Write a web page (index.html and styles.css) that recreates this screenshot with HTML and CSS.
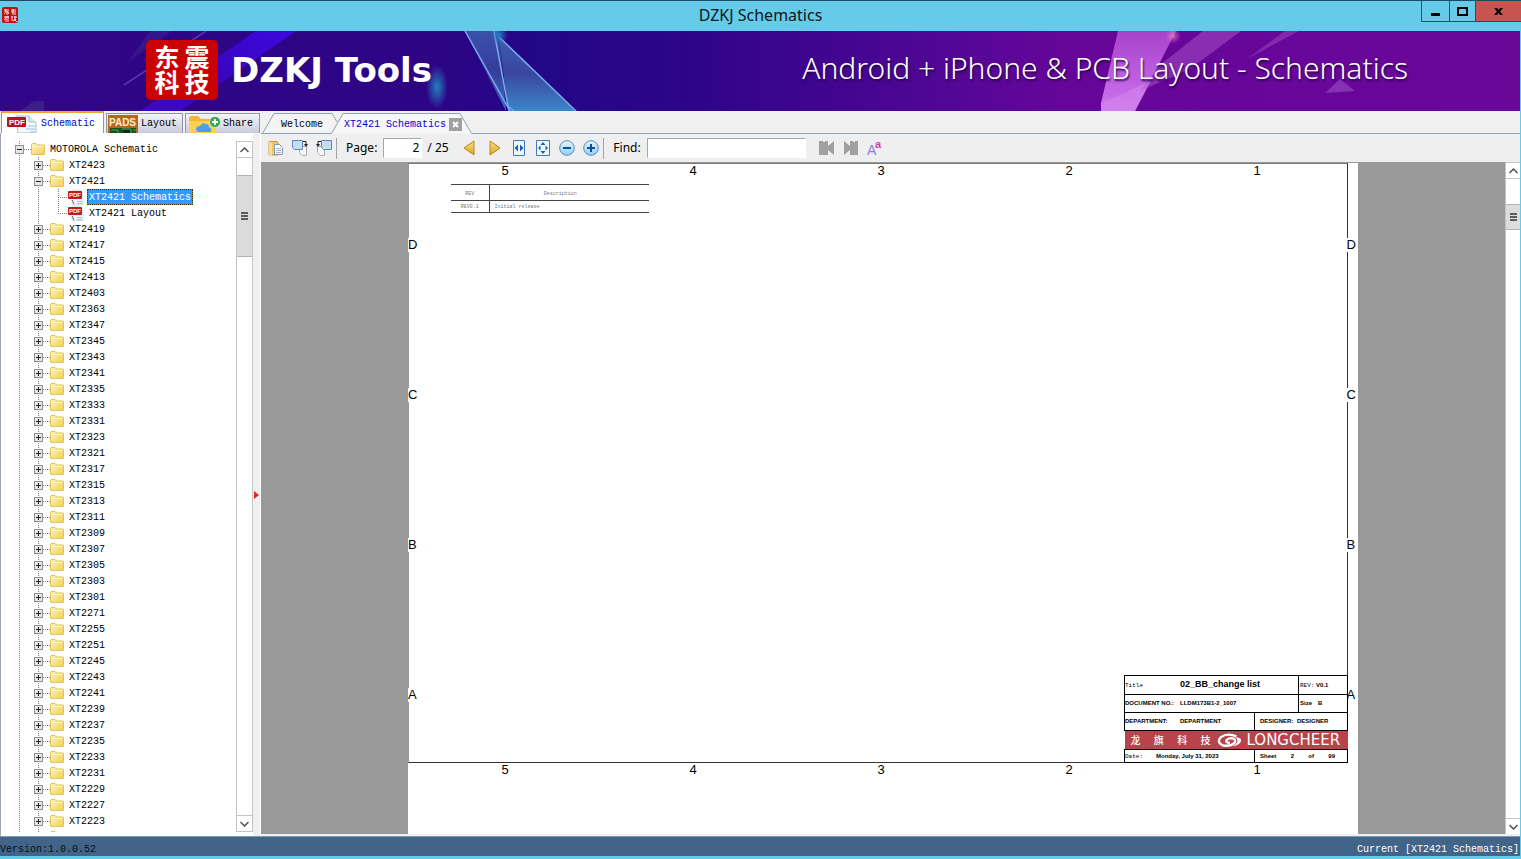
FILE: index.html
```html
<!DOCTYPE html>
<html lang="en">
<head>
<meta charset="utf-8">
<title>DZKJ Schematics</title>
<link rel="stylesheet" href="styles.css">
</head>
<body>
<svg class="defs" width="0" height="0" aria-hidden="true">
  <defs>
    <linearGradient id="gFold" x1="0" y1="0" x2="1" y2="1"><stop offset="0" stop-color="#fff6b4"/><stop offset="1" stop-color="#f3ce59"/></linearGradient>
    <linearGradient id="gGold" x1="0" y1="0" x2="0" y2="1"><stop offset="0" stop-color="#f9e08a"/><stop offset="1" stop-color="#dba520"/></linearGradient>
    <linearGradient id="gBlue" x1="0" y1="0" x2="0" y2="1"><stop offset="0" stop-color="#e9f5ff"/><stop offset="1" stop-color="#93cdf5"/></linearGradient>
  </defs>
  <symbol id="folder" viewBox="0 0 14 14"><path d="M.5 2.500q0-1 1-1h3.500l1.500 1.500h6.500q.5 0 .5.5v8.500q0 .5-.5.5h-12q-.5 0-.5-.5z" fill="url(#gFold)" stroke="#e2c05c"/><path d="M1.500 4.500h11" stroke="#fffbd8"/></symbol>
</svg>

<header class="titlebar">
  <svg class="app-icon" viewBox="0 0 16 16"><rect width="16" height="16" rx="2" fill="#c40d0d"/><path d="M2 3h5M4 2l-1 3h4M5 4v4M2 7l1-1M6 6l1 1M9 3h5M9 5h5M11 2v4M10 7h4M2 10h5M4 9v6M2 13l2-2M6 9v6M9 10h2M10 9v5M12 10h3M13 9v3M11 14l3-2M12 12l3 3" stroke="#fff" stroke-width=".9" fill="none"/></svg>
  <h1>DZKJ Schematics</h1>
  <div class="win-buttons">
    <button class="wb wb-min" aria-label="Minimize"><svg viewBox="0 0 11 9"><path d="M1 6h9v3H1z"/></svg></button>
    <button class="wb wb-max" aria-label="Maximize"><svg viewBox="0 0 11 9"><path d="M1 1h9v7H1z" fill="none" stroke="#000" stroke-width="2"/></svg></button>
    <button class="wb wb-close" aria-label="Close"><svg viewBox="0 0 11 9"><path d="M1 1h3l1.500 2L7 1h3L7 4.500 10 8H7L5.500 6 4 8H1l3-3.500z"/></svg></button>
  </div>
</header>

<section class="banner">
  <svg class="banner-art" viewBox="0 0 1521 80" preserveAspectRatio="xMinYMin slice" aria-hidden="true">
    <defs>
      <linearGradient id="bg"><stop offset="0" stop-color="#310688"/><stop offset=".29" stop-color="#2c0484"/><stop offset=".36" stop-color="#220786"/><stop offset=".45" stop-color="#2d0488"/><stop offset=".58" stop-color="#480692"/><stop offset=".7" stop-color="#650699"/><stop offset="1" stop-color="#6a0799"/></linearGradient>
      <linearGradient id="ray" x1="1" y1="0" x2="0" y2="1"><stop offset="0" stop-color="#3c08e0"/><stop offset=".5" stop-color="#3d05cf" stop-opacity=".8"/><stop offset="1" stop-color="#4308e0" stop-opacity=".7"/></linearGradient>
      <linearGradient id="tri" x1="0" y1="0" x2="0" y2="1"><stop offset="0" stop-color="#3c5fb0"/><stop offset=".5" stop-color="#3a469f"/><stop offset="1" stop-color="#3a86c8"/></linearGradient>
      <linearGradient id="pk" x1="0" y1="0" x2="0" y2="1"><stop offset="0" stop-color="#a842cb"/><stop offset="1" stop-color="#cc75ee"/></linearGradient>
      <radialGradient id="glow"><stop offset="0" stop-color="#257fc0"/><stop offset="1" stop-color="#257fc0" stop-opacity="0"/></radialGradient>
      <radialGradient id="hot"><stop offset="0" stop-color="#f59bc8"/><stop offset="1" stop-color="#e060c0" stop-opacity="0"/></radialGradient>
    </defs>
    <rect width="1521" height="80" fill="url(#bg)"/>
    <path d="M256 0h40L180 80h-40z" fill="url(#ray)"/>
    <path d="M150 0h22L128 31z" fill="#3c2590" opacity=".5"/>
    <path d="M206 0L124 54" stroke="#6a5cc0" stroke-width="1.500" opacity=".6"/>
    <path d="M20 80l14-10h10v10z" fill="#46469c" opacity=".4"/>
    <ellipse cx="437" cy="56" rx="11" ry="22" fill="url(#glow)"/>
    <path d="M465 0h34l7 80z" fill="url(#tri)" opacity=".85"/>
    <path d="M499 5l77 75h-68z" fill="url(#tri)"/>
    <path d="M465 0l45 80M494 0l14 75 6 5M499 6l77 74" fill="none" stroke="#79a6ec" stroke-width="1.500"/>
    <circle cx="499" cy="4" r="9" fill="url(#glow)"/>
    <path d="M1118 0h58l-41 80h-34v-8z" fill="url(#pk)"/>
    <path d="M1203 0h38l-51 38-50 22 20-26z" fill="#963bb9" opacity=".75"/>
    <path d="M1285 0h14l-52 28z" fill="#9038b5" opacity=".7"/>
    <path d="M1340 48l15 12-30 2z" fill="#8631b4"/>
    <path d="M1101 72l50-22-16 30h-34z" fill="#d58af3" opacity=".5"/>
    <circle cx="1173" cy="5" r="8" fill="url(#hot)" opacity=".7"/>
  </svg>
  <div class="logo"><span>东</span><span>震</span><span>科</span><span>技</span></div>
  <p class="brand">DZKJ Tools</p>
  <p class="slogan">Android + iPhone &amp; PCB Layout - Schematics</p>
</section>

<main class="main">
  <aside class="side">
    <nav class="side-tabs">
      <button class="stab active"><svg width="32" height="18" viewBox="0 0 32 18"><path d="M9 1h13l7 7v10H11z" fill="#f2f8fc" stroke="#a9bccb"/><path d="M22 1v6h7" fill="#d7e6f0" stroke="#a9bccb"/><path d="M21 11h7M19 14h9M23 17h5" stroke="#9cc4e6"/><rect y="2" width="19" height="10" rx="1" fill="#b8141c"/><text x="2" y="10" class="pdf-lg">PDF</text></svg>Schematic</button>
      <button class="stab wide"><svg width="30" height="19" viewBox="0 0 30 19"><rect width="30" height="19" fill="#b8651e"/><text x="1" y="11" class="pads">PADS</text><path d="M2 13h26v6H2z" fill="#164f20"/><path d="M3 15h7v3M14 14h9v5M25 15h3" stroke="#4fa34c" fill="none"/><path d="M15 15h7v3h-7z" fill="#222"/></svg>Layout</button>
      <button class="stab share"><svg width="32" height="18" viewBox="0 0 32 18"><path d="M0 3q0-2 2-2h7l3 3h14v14H0z" fill="#f2b632"/><path d="M0 6h27v12H0z" fill="#ffd04f"/><path d="M10 17q-3 0-3-3t4-3q2-4 6-2 3 0 3 3 3 1 2 5z" fill="#4ba0e8"/><circle cx="26" cy="7" r="5.500" fill="#38a64a" stroke="#fff" stroke-width=".6"/><path d="M26 4v6M23 7h6" stroke="#fff" stroke-width="1.800"/></svg>Share</button>
    </nav>
    <div class="side-body">
      <div class="tree-wrap">
      <ul class="tree">
        <li class="root"><button class="box minus" aria-label="Collapse"></button><svg class="fold"><use href="#folder"/></svg><a href="#">MOTOROLA Schematic</a></li>
        <li><button class="box" aria-label="Expand"></button><svg class="fold"><use href="#folder"/></svg><a href="#">XT2423</a></li>
        <li><button class="box minus" aria-label="Collapse"></button><svg class="fold"><use href="#folder"/></svg><a href="#">XT2421</a></li>
        <li class="leaf"><svg class="pdf" viewBox="0 0 16 16"><path d="M4 1h8l3 4v10.500H4z" fill="#eef6fc" stroke="#c0d2e0" stroke-width=".6"/><path d="M9 12.500h5M9 14.500h5" stroke="#9cc4e6"/><path d="M4 11l2 4" stroke="#667"/><rect y="2" width="14" height="8" rx="1" fill="#c11920"/><text x="1" y="8" class="pdf-sm">PDF</text></svg><a href="#" class="selected">XT2421 Schematics</a></li>
        <li class="leaf last"><svg class="pdf" viewBox="0 0 16 16"><path d="M4 1h8l3 4v10.500H4z" fill="#eef6fc" stroke="#c0d2e0" stroke-width=".6"/><path d="M9 12.500h5M9 14.500h5" stroke="#9cc4e6"/><path d="M4 11l2 4" stroke="#667"/><rect y="2" width="14" height="8" rx="1" fill="#c11920"/><text x="1" y="8" class="pdf-sm">PDF</text></svg><a href="#">XT2421 Layout</a></li>
        <li><button class="box" aria-label="Expand"></button><svg class="fold"><use href="#folder"/></svg><a href="#">XT2419</a></li>
        <li><button class="box" aria-label="Expand"></button><svg class="fold"><use href="#folder"/></svg><a href="#">XT2417</a></li>
        <li><button class="box" aria-label="Expand"></button><svg class="fold"><use href="#folder"/></svg><a href="#">XT2415</a></li>
        <li><button class="box" aria-label="Expand"></button><svg class="fold"><use href="#folder"/></svg><a href="#">XT2413</a></li>
        <li><button class="box" aria-label="Expand"></button><svg class="fold"><use href="#folder"/></svg><a href="#">XT2403</a></li>
        <li><button class="box" aria-label="Expand"></button><svg class="fold"><use href="#folder"/></svg><a href="#">XT2363</a></li>
        <li><button class="box" aria-label="Expand"></button><svg class="fold"><use href="#folder"/></svg><a href="#">XT2347</a></li>
        <li><button class="box" aria-label="Expand"></button><svg class="fold"><use href="#folder"/></svg><a href="#">XT2345</a></li>
        <li><button class="box" aria-label="Expand"></button><svg class="fold"><use href="#folder"/></svg><a href="#">XT2343</a></li>
        <li><button class="box" aria-label="Expand"></button><svg class="fold"><use href="#folder"/></svg><a href="#">XT2341</a></li>
        <li><button class="box" aria-label="Expand"></button><svg class="fold"><use href="#folder"/></svg><a href="#">XT2335</a></li>
        <li><button class="box" aria-label="Expand"></button><svg class="fold"><use href="#folder"/></svg><a href="#">XT2333</a></li>
        <li><button class="box" aria-label="Expand"></button><svg class="fold"><use href="#folder"/></svg><a href="#">XT2331</a></li>
        <li><button class="box" aria-label="Expand"></button><svg class="fold"><use href="#folder"/></svg><a href="#">XT2323</a></li>
        <li><button class="box" aria-label="Expand"></button><svg class="fold"><use href="#folder"/></svg><a href="#">XT2321</a></li>
        <li><button class="box" aria-label="Expand"></button><svg class="fold"><use href="#folder"/></svg><a href="#">XT2317</a></li>
        <li><button class="box" aria-label="Expand"></button><svg class="fold"><use href="#folder"/></svg><a href="#">XT2315</a></li>
        <li><button class="box" aria-label="Expand"></button><svg class="fold"><use href="#folder"/></svg><a href="#">XT2313</a></li>
        <li><button class="box" aria-label="Expand"></button><svg class="fold"><use href="#folder"/></svg><a href="#">XT2311</a></li>
        <li><button class="box" aria-label="Expand"></button><svg class="fold"><use href="#folder"/></svg><a href="#">XT2309</a></li>
        <li><button class="box" aria-label="Expand"></button><svg class="fold"><use href="#folder"/></svg><a href="#">XT2307</a></li>
        <li><button class="box" aria-label="Expand"></button><svg class="fold"><use href="#folder"/></svg><a href="#">XT2305</a></li>
        <li><button class="box" aria-label="Expand"></button><svg class="fold"><use href="#folder"/></svg><a href="#">XT2303</a></li>
        <li><button class="box" aria-label="Expand"></button><svg class="fold"><use href="#folder"/></svg><a href="#">XT2301</a></li>
        <li><button class="box" aria-label="Expand"></button><svg class="fold"><use href="#folder"/></svg><a href="#">XT2271</a></li>
        <li><button class="box" aria-label="Expand"></button><svg class="fold"><use href="#folder"/></svg><a href="#">XT2255</a></li>
        <li><button class="box" aria-label="Expand"></button><svg class="fold"><use href="#folder"/></svg><a href="#">XT2251</a></li>
        <li><button class="box" aria-label="Expand"></button><svg class="fold"><use href="#folder"/></svg><a href="#">XT2245</a></li>
        <li><button class="box" aria-label="Expand"></button><svg class="fold"><use href="#folder"/></svg><a href="#">XT2243</a></li>
        <li><button class="box" aria-label="Expand"></button><svg class="fold"><use href="#folder"/></svg><a href="#">XT2241</a></li>
        <li><button class="box" aria-label="Expand"></button><svg class="fold"><use href="#folder"/></svg><a href="#">XT2239</a></li>
        <li><button class="box" aria-label="Expand"></button><svg class="fold"><use href="#folder"/></svg><a href="#">XT2237</a></li>
        <li><button class="box" aria-label="Expand"></button><svg class="fold"><use href="#folder"/></svg><a href="#">XT2235</a></li>
        <li><button class="box" aria-label="Expand"></button><svg class="fold"><use href="#folder"/></svg><a href="#">XT2233</a></li>
        <li><button class="box" aria-label="Expand"></button><svg class="fold"><use href="#folder"/></svg><a href="#">XT2231</a></li>
        <li><button class="box" aria-label="Expand"></button><svg class="fold"><use href="#folder"/></svg><a href="#">XT2229</a></li>
        <li><button class="box" aria-label="Expand"></button><svg class="fold"><use href="#folder"/></svg><a href="#">XT2227</a></li>
        <li><button class="box" aria-label="Expand"></button><svg class="fold"><use href="#folder"/></svg><a href="#">XT2223</a></li>
        <li><span class="blank"></span><svg class="fold"><use href="#folder"/></svg></li>
      </ul>
      <div class="scroll">
        <button class="arrow" aria-label="Scroll up"><svg viewBox="0 0 9 6"><path d="M.5 5l4-4 4 4"/></svg></button>
        <div class="track tree-track"><div class="thumb"><i></i><i></i><i></i></div></div>
        <button class="arrow" aria-label="Scroll down"><svg viewBox="0 0 9 6"><path d="M.5 1l4 4 4-4"/></svg></button>
      </div>
      </div>
      <div class="splitter"><svg width="5" height="8" viewBox="0 0 5 8"><path d="M0 0l5 4-5 4z" fill="#d8282c"/></svg></div>
    </div>
  </aside>

  <section class="work">
    <nav class="doc-tabs">
      <svg class="tab-lines" width="212" height="23" viewBox="0 0 212 23" aria-hidden="true"><path d="M1.500 22.500L13 2.500H71l4 7-6 13z" fill="#f3f3f3" stroke="none"/><path d="M70 23L82 2.500H199L211 23z" fill="#f7f7f7" stroke="none"/><path d="M0 22.500h1.500L13 2.500H71L76 11M1 22.500H70.500L82 2.500H199L210.500 22.500H212" fill="none" stroke="#8ea2b4"/><path d="M72 22.500H209" stroke="#f1f1f1"/></svg>
      <button class="dtab">Welcome</button>
      <button class="dtab current">XT2421 Schematics</button>
      <button class="tab-x" aria-label="Close tab"><svg viewBox="0 0 13 13"><path d="M4 4l5 5M9 4l-5 5" stroke="#fff" stroke-width="2"/></svg></button>
    </nav>
    <div class="toolbar">
      <button class="tb" aria-label="Copy"><svg viewBox="0 0 16 16"><path d="M1 1.500h8l1 1V15H1z" fill="#f2c766" stroke="#c9973a"/><path d="M1 1v14l3 1V3z" fill="#f9dc91"/><path d="M6.500 4.500h5l3 3v7h-8z" fill="#fff" stroke="#8296ab"/><path d="M8 8.500h5M8 10.500h5M8 12.500h5" stroke="#9fb3c6"/></svg></button>
      <button class="tb" aria-label="Rotate right"><svg viewBox="0 0 16 16"><path d="M7.500 6.500h7v9h-4l-3-3z" fill="#f6f8fa" stroke="#a5adb6"/><path d="M.5.5h10v9h-8l-2-2z" fill="#c5dcf5" stroke="#5d86b8"/><path d="M11 1.500h3v3" fill="none" stroke="#222"/><path d="M12 4h4l-2 3z" fill="#222"/></svg></button>
      <button class="tb" aria-label="Rotate left"><svg viewBox="0 0 16 16"><path d="M1.500 6.500h7v9h-4l-3-3z" fill="#f6f8fa" stroke="#a5adb6"/><path d="M5.500.5h10v9h-8l-2-2z" fill="#c5dcf5" stroke="#5d86b8"/><path d="M5 1.500H2v3" fill="none" stroke="#222"/><path d="M0 4h4L2 7z" fill="#222"/></svg></button>
      <span class="sep"></span>
      <label for="page">Page:</label>
      <input id="page" class="page-no" type="text" value="2">
      <span class="total">/ 25</span>
      <button class="tb" aria-label="Previous page"><svg viewBox="0 0 16 16"><path d="M13 1v14L3 8z" fill="url(#gGold)" stroke="#b8870f"/></svg></button>
      <button class="tb next" aria-label="Next page"><svg viewBox="0 0 16 16"><path d="M3 1v14l10-7z" fill="url(#gGold)" stroke="#b8870f"/></svg></button>
      <button class="tb" aria-label="Fit width"><svg viewBox="0 0 16 16"><path d="M2.500.5h11v15h-11z" fill="#edf5ff" stroke="#3f78bd"/><path d="M7 4.500v7L3.500 8zM9 4.500v7L12.500 8z" fill="#1d5fae"/></svg></button>
      <button class="tb" aria-label="Fit page"><svg viewBox="0 0 16 16"><path d="M1.500.5h13v15h-13z" fill="#edf5ff" stroke="#3f78bd"/><path d="M8 2l2.500 3h-5zM8 14l2.500-3h-5zM3 8l2.500-2.500v5zM13 8l-2.500-2.500v5z" fill="#1d5fae"/></svg></button>
      <button class="tb" aria-label="Zoom out"><svg viewBox="0 0 16 16"><circle cx="8" cy="8" r="7.300" fill="url(#gBlue)" stroke="#4f8fca"/><path d="M4 8h8" stroke="#0e4f9c" stroke-width="2"/></svg></button>
      <button class="tb" aria-label="Zoom in"><svg viewBox="0 0 16 16"><circle cx="8" cy="8" r="7.300" fill="url(#gBlue)" stroke="#4f8fca"/><path d="M4 8h8M8 4v8" stroke="#0e4f9c" stroke-width="2"/></svg></button>
      <span class="sep"></span>
      <label for="find">Find:</label>
      <input id="find" class="find" type="text">
      <button class="tb" aria-label="Find previous"><svg viewBox="0 0 16 16"><path d="M0 1h4v1h2V1h3v5l6-5v14l-6-5v5H0z" fill="#a0a0a0"/></svg></button>
      <button class="tb" aria-label="Find next"><svg viewBox="0 0 16 16"><path d="M1 1l6 5V1h3v1h2V1h3v14H7v-5l-6 5z" fill="#a0a0a0"/></svg></button>
      <button class="tb" aria-label="Match case"><svg viewBox="0 0 16 16"><text x="0" y="15" class="case-a">A</text><text x="8" y="8" class="case-b">a</text></svg></button>
    </div>
    <div class="viewer">
      <div class="canvas">
        <article class="page">
          <div class="frame"></div>
          <div class="cols top"><span>5</span><span>4</span><span>3</span><span>2</span><span>1</span></div>
          <div class="cols bottom"><span>5</span><span>4</span><span>3</span><span>2</span><span>1</span></div>
          <div class="rows left"><span>D</span><span>C</span><span>B</span><span>A</span></div>
          <div class="rows right"><span>D</span><span>C</span><span>B</span><span>A</span></div>
          <table class="rev">
            <tr class="rev-head"><th>REV</th><th>Description</th></tr>
            <tr><td>REV0.1</td><td>Initial release</td></tr>
          </table>
          <table class="block">
            <colgroup><col class="c1"><col class="c2"><col class="c3"></colgroup>
            <tr class="r1"><td colspan="2"><span class="k mono">Title</span><strong>02_BB_change list</strong></td><td class="pad-sm"><span class="mono">REV:</span> V0.1</td></tr>
            <tr class="r2"><td colspan="2"><span class="k">DOCUMENT NO.:</span>LLDM173B1-2_1007</td><td class="pad-sm"><span class="s">Size</span>B</td></tr>
            <tr class="r2"><td><span class="k">DEPARTMENT:</span>DEPARTMENT</td><td colspan="2" class="pad"><span class="d">DESIGNER:</span>DESIGNER</td></tr>
            <tr class="r2 red"><td colspan="3"><div class="maker"><div class="cn"><span>龙</span><span>旗</span><span>科</span><span>技</span></div><svg width="25" height="15" viewBox="0 0 27 15"><path d="M21 3Q11-1 4 4q-5 6 3 9 8 1 12-3 2-4-3-5-5 0-6 3 0 2 4 2" fill="none" stroke="#fff" stroke-width="2.500"/><path d="M19 4q8 0 7 4-1 4-9 6 6-4 5-7 0-2-3-3z" fill="#fff"/></svg><span class="en">LONGCHEER</span></div></td></tr>
            <tr class="r5"><td><span class="dt mono">Date:</span>Monday, July 31, 2023</td><td colspan="2" class="pad"><div class="sheet"><span>Sheet</span><span>2</span><span>of</span><span>99</span></div></td></tr>
          </table>
        </article>
      </div>
      <div class="scroll view-scroll">
        <button class="arrow" aria-label="Scroll up"><svg viewBox="0 0 9 6"><path d="M.5 5l4-4 4 4"/></svg></button>
        <div class="track view-track"><div class="thumb"><i></i><i></i><i></i></div></div>
        <button class="arrow" aria-label="Scroll down"><svg viewBox="0 0 9 6"><path d="M.5 1l4 4 4-4"/></svg></button>
      </div>
    </div>
  </section>
</main>

<footer class="status"><span class="ver">Version:1.0.0.52</span><span>Current [XT2421 Schematics]</span></footer>
</body>
</html>
```
FILE: styles.css
```css
* { box-sizing: border-box; }
html, body { height: 100%; }
body {
  margin: 0;
  display: flex;
  flex-direction: column;
  overflow: hidden;
  background: #66cae9;
  color: #000;
  font: 10px/16px "Liberation Mono", "Noto Sans CJK SC", monospace;
}
button { margin: 0; padding: 0; border: 0; background: none; font: inherit; color: inherit; }
a { color: inherit; text-decoration: none; }
p, h1, ul { margin: 0; padding: 0; }
.defs { position: absolute; }

/* Title bar */
.titlebar {
  flex: none;
  height: 31px;
  display: grid;
  grid-template-columns: 1fr auto 1fr;
  border-top: 1px solid #1b4a66;
  background: #66cae9;
}
.app-icon { width: 16px; height: 16px; margin: 6px 2px; }
.titlebar h1 { font: 400 16px/28px "Noto Sans", sans-serif; color: #101820; }
.win-buttons { display: flex; justify-content: flex-end; }
.wb { height: 21px; display: flex; align-items: center; justify-content: center; border: 1px solid #24505f; border-top: 0; border-right: 0; }
.wb svg { width: 11px; height: 9px; }
.wb-min { width: 28px; }
.wb-max { width: 26px; }
.wb-close { width: 46px; background: #c75450; }

/* Banner */
.banner {
  flex: none;
  position: relative;
  height: 80px;
  display: flex;
  align-items: center;
  padding: 0 112px 2px 146px;
  margin-right: 1px;
  background: #6a0799;
  color: #fff;
  overflow: hidden;
}
.banner-art { position: absolute; inset: 0; width: 100%; height: 100%; }
.logo {
  position: relative;
  flex: none;
  width: 72px;
  height: 60px;
  display: grid;
  grid-template-columns: 30px 30px;
  grid-auto-rows: 25px;
  place-content: center;
  text-align: center;
  border-radius: 5px;
  background: #cb0203;
  font: 700 25px/23px "Noto Sans CJK SC", sans-serif;
}
.brand { position: relative; margin-left: 13px; font: 700 34px/38px "DejaVu Sans", sans-serif; white-space: nowrap; }
.slogan { position: relative; margin: 0 0 4px auto; font: 300 30px/38px "Noto Sans", sans-serif; white-space: nowrap; text-shadow: 1px 2px 2px #2a0448; }

/* Body */
.main { flex: 1; min-height: 0; display: flex; margin-right: 1px; background: #f0f0f0; }
.side { flex: none; width: 261px; display: flex; flex-direction: column; }
.side-tabs { flex: none; height: 22px; display: flex; gap: 2px; padding-left: 1px; align-items: flex-end; }
.stab {
  width: 75px;
  height: 20px;
  display: flex;
  align-items: center;
  gap: 2px;
  padding: 1px 0 0 3px;
  border: 1px solid #9096a4;
  border-bottom: 0;
  background: linear-gradient(#f4f4f8, #c9cbdb);
  white-space: nowrap;
}
.stab.wide { width: 77px; gap: 3px; padding-left: 1px; }
.stab.active { width: 103px; height: 22px; padding: 1px 0 0 5px; border-top: 2px solid #f0a02c; background: #fff; color: #0000d0; }
.stab svg { flex: none; }
.pdf-lg, .pads, .pdf-sm { fill: #fff; font-family: "Liberation Sans", sans-serif; font-weight: 700; }
.pdf-lg { font-size: 8px; }
.pads { font-size: 10px; fill: #fff0c8; }
.pdf-sm { font-size: 6px; }

.side-body { flex: 1; min-height: 0; display: flex; border-left: 1px solid #9fa9b5; }
.tree-wrap { flex: 1; min-width: 0; display: flex; padding: 8px 0 4px; background: #fff; }
.tree {
  flex: 1;
  min-width: 0;
  list-style: none;
  overflow: hidden;
  background: repeating-linear-gradient(#808080 0 1px, transparent 1px 2px) 18px 0 / 1px 100% no-repeat;
}
.tree li {
  height: 16px;
  display: flex;
  align-items: center;
  padding-left: 33px;
  background: repeating-linear-gradient(#808080 0 1px, transparent 1px 2px) 37px 0 / 1px 100% no-repeat;
}
.tree li.root { padding-left: 14px; background: none; }
.tree li.leaf {
  padding-left: 67px;
  background:
    repeating-linear-gradient(#808080 0 1px, transparent 1px 2px) 37px 0 / 1px 100% no-repeat,
    repeating-linear-gradient(#808080 0 1px, transparent 1px 2px) 57px 0 / 1px 100% no-repeat,
    repeating-linear-gradient(90deg, #808080 0 1px, transparent 1px 2px) 57px 8px / 10px 1px no-repeat;
}
.tree li.last {
  background:
    repeating-linear-gradient(#808080 0 1px, transparent 1px 2px) 37px 0 / 1px 100% no-repeat,
    repeating-linear-gradient(#808080 0 1px, transparent 1px 2px) 57px 0 / 1px 8px no-repeat,
    repeating-linear-gradient(90deg, #808080 0 1px, transparent 1px 2px) 57px 8px / 10px 1px no-repeat;
}
.box {
  flex: none;
  width: 9px;
  height: 9px;
  border: 1px solid #919191;
  background:
    linear-gradient(#222, #222) center / 5px 1px no-repeat,
    linear-gradient(#222, #222) center / 1px 5px no-repeat,
    #e6e6e6;
}
.box.minus { background: linear-gradient(#222, #222) center / 5px 1px no-repeat, #e6e6e6; }
.blank { width: 9px; }
.fold {
  flex: none;
  width: 21px;
  height: 14px;
  padding-left: 7px;
  background: repeating-linear-gradient(90deg, #808080 0 1px, transparent 1px 2px) 0 7px / 7px 1px no-repeat;
}
.tree a { height: 16px; padding: 2px 1px 0; margin-left: 4px; line-height: 12px; border: 1px dotted transparent; white-space: nowrap; }
.fold + a { border-width: 1px 0; }
.pdf { flex: none; width: 16px; height: 16px; }
.tree .leaf a { margin-left: 3px; }
.tree .selected { background: #3399ff; color: #fff; border-color: #4a3000; }

.scroll { flex: none; width: 17px; display: flex; flex-direction: column; border: 1px solid #c4c4c4; background: #fff; }
.arrow { flex: none; height: 16px; display: flex; align-items: center; justify-content: center; }
.arrow svg { width: 9px; height: 6px; fill: none; stroke: #505050; stroke-width: 1.5; }
.arrow:first-child { border-bottom: 1px solid #c4c4c4; }
.arrow:last-child { border-top: 1px solid #c4c4c4; }
.track { flex: 1; min-height: 0; }
.thumb { display: flex; flex-direction: column; align-items: center; justify-content: center; gap: 1px; border: 1px solid #b4b4b4; border-width: 1px 0; background: #dcdcdc; }
.thumb i { width: 7px; height: 2px; background: #5c5c5c; }
.tree-track { padding-top: 17px; }
.tree-track .thumb { height: 82px; }
.splitter { flex: none; width: 8px; display: flex; align-items: center; padding: 20px 0 0 1px; background: #f0f0f0; border-right: 1px solid #fff; }

.work { flex: 1; min-width: 0; display: flex; flex-direction: column; }
.doc-tabs {
  flex: none;
  position: relative;
  height: 23px;
  display: flex;
  align-items: center;
  padding: 4px 0 0 20px;
  background: linear-gradient(#8ea2b4, #8ea2b4) 212px 22px / 100% 1px no-repeat;
}
.tab-lines { position: absolute; left: 0; top: 0; }
.dtab { position: relative; height: 19px; width: 63px; text-align: left; white-space: nowrap; }
.dtab.current { width: 105px; color: #0000d0; }
.tab-x { position: relative; width: 13px; height: 13px; background: #a0a0a0; }
.tab-x svg { display: block; }

.toolbar {
  flex: none;
  height: 28px;
  display: flex;
  align-items: center;
  padding-left: 7px;
  gap: 8px;
  background: #efefef;
  font: 12px/20px "Noto Sans", sans-serif;
}
.tb { flex: none; width: 16px; height: 16px; }
.tb svg { display: block; width: 16px; height: 16px; overflow: visible; }
.sep { width: 1px; height: 21px; margin: 0 1px 0 -4px; background: #a4a4a4; }
.toolbar input { height: 20px; border: 1px solid #a8a8a8; border-color: #a8a8a8 #fff #fff #a8a8a8; background: #fff; font: inherit; padding: 0 2px; border-radius: 0; outline: 0; }
.toolbar .page-no { width: 39px; margin-left: -2px; text-align: right; }
.total { margin-left: -3px; width: 26px; white-space: nowrap; }
.next { margin-left: 2px; }
.toolbar .find { width: 159px; margin: 0 -2px; }
.toolbar .find ~ .tb { position: static; }
.toolbar .find { margin-right: -1px; }
.case-a { font: 14px "Liberation Sans", sans-serif; fill: #9077e8; }
.case-b { font: 700 11px "Liberation Sans", sans-serif; fill: #d63bb2; }
.toolbar .find { margin: 0 5px 0 -2px; }

/* Sheet view */
.viewer { flex: 1; min-height: 0; display: flex; margin-bottom: 2px; background: #999; }
.canvas { flex: 1; min-width: 0; display: flex; justify-content: center; padding-top: 1px; overflow: hidden; }
.page { position: relative; width: calc(100% - 294px); background: #fff; font: 13px/14px "Liberation Sans", sans-serif; }
.frame { height: 600px; margin-right: 10px; border: 1px solid #333; border-color: #777 #333 #333 #999; }
.cols { position: absolute; left: 3px; right: 7px; display: flex; justify-content: space-around; }
.cols.top { top: 1px; }
.cols.bottom { top: 600px; }
.rows { position: absolute; top: 7px; height: 600px; display: flex; flex-direction: column; justify-content: space-around; }
.rows.left { left: 0; }
.rows.right { right: 2px; }
.cols span, .rows span { background: #fff; }
table { border-collapse: collapse; table-layout: fixed; }
td, th { padding: 0; font-weight: inherit; text-align: left; white-space: nowrap; overflow: hidden; }
.rev { position: absolute; left: 43px; top: 21px; width: 198px; color: #777; font: 5px/10px "Liberation Mono", monospace; }
.rev tr { height: 12px; border: 1px solid #444; border-width: 1px 0; }
.rev .rev-head { height: 16px; }
.rev th { text-align: center; padding-top: 3px; }
.rev td:first-child { text-align: center; }
.rev td + td { padding-left: 5px; }
.rev th:first-child, .rev td:first-child { width: 38px; border-right: 1px solid #444; }
.rev th + th { padding-right: 18px; }
.block { position: absolute; right: 10px; top: 512px; width: 224px; background: #fff; font: 700 6px/9px "Liberation Sans", sans-serif; }
.block td { border: 1px solid #000; }
.c1 { width: 130px; }
.c2 { width: 44px; }
.r1 { height: 19px; }
.r2 { height: 18px; }
.r5 { height: 13px; }
.block strong { font-size: 9px; vertical-align: middle; }
.block span { display: inline-block; }
.block .mono { font: 6px/9px "Liberation Mono", monospace; }
.block .k { width: 55px; }
.block .s { width: 18px; }
.block .d { width: 37px; }
.block .dt { width: 31px; }
.block .pad { padding-left: 5px; }
.block .pad-sm { padding-left: 1px; }
.block .red td { background: #b8434a; border: 0; color: #fff; }
.maker { height: 18px; display: flex; align-items: center; padding-left: 6px; }
.maker .cn { width: 80px; margin-right: 6px; display: flex; justify-content: space-between; font: 500 10px/18px "Noto Sans CJK SC", sans-serif; }
.maker .en { margin-left: 5px; font: 400 15px/18px "DejaVu Sans", sans-serif; }
.sheet { display: flex; justify-content: space-between; padding-right: 12px; }

.view-scroll { width: 15px; border-width: 1px 0 0 1px; }
.view-track { padding-top: 25px; }
.view-track .thumb { height: 26px; }

.status {
  flex: none;
  height: 20px;
  margin: 0 1px 3px 0;
  display: flex;
  justify-content: space-between;
  align-items: flex-end;
  padding-right: 1px;
  border-top: 1px solid #8499ae;
  background: #426488;
  color: #fff;
  line-height: 13px;
}
.ver { color: #05101c; }
```
